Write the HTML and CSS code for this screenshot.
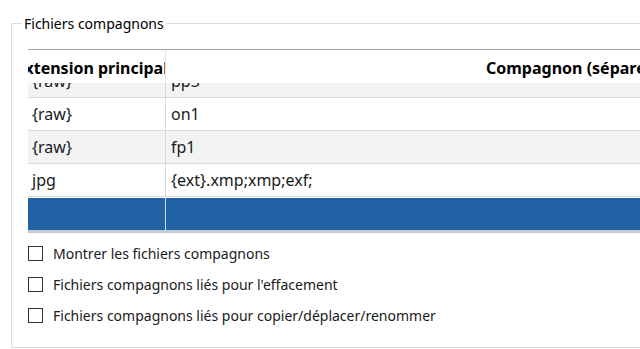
FILE: index.html
```html
<!DOCTYPE html>
<html lang="fr">
<head>
<meta charset="utf-8">
<link rel="stylesheet" href="styles.css">
</head>
<body>
<fieldset class="group">
  <legend class="group-title">Fichiers compagnons</legend>
  <div class="table">
    <div class="thead">
      <div class="th th-ext"><span>Extension principale</span></div>
      <div class="th th-comp"><span>Compagnon (séparés par ;)</span></div>
    </div>
    <div class="tbody">
      <div class="row alt partial"><div class="cell c1">{raw}</div><div class="cell c2">pp3</div></div>
      <div class="row"><div class="cell c1">{raw}</div><div class="cell c2">on1</div></div>
      <div class="row alt"><div class="cell c1">{raw}</div><div class="cell c2">fp1</div></div>
      <div class="row"><div class="cell c1">jpg</div><div class="cell c2">{ext}.xmp;xmp;exf;</div></div>
      <div class="row selected"><div class="cell c1"></div><div class="cell c2"></div></div>
    </div>
  </div>
  <div class="options">
    <label class="check"><span class="box"></span><span>Montrer les fichiers compagnons</span></label>
    <label class="check"><span class="box"></span><span>Fichiers compagnons liés pour l'effacement</span></label>
    <label class="check"><span class="box"></span><span>Fichiers compagnons liés pour copier/déplacer/renommer</span></label>
  </div>
</fieldset>
</body>
</html>
```
FILE: styles.css
```css
html, body {
  margin: 0;
  padding: 0;
  background: #ffffff;
  overflow: hidden;
  width: 640px;
  height: 349px;
}
body {
  font-family: "Noto Sans", "Open Sans", sans-serif;
  font-size: 14px;
  color: #000;
}
.group {
  margin: 14px 0 0 11px;
  padding: 16px 0 0 16px;
  width: 700px;
  height: 334px;
  border: 1px solid #dcdcdc;
  box-sizing: border-box;
  min-inline-size: 0;
}
.group-title {
  padding: 0 2px;
  margin-left: -6px;
  line-height: 19px;
  font-size: 14px;
}
.table {
  width: 900px;
  border-top: 1px solid #a3a3a3;
}
.thead {
  display: grid;
  grid-template-columns: 138px 1fr;
  height: 33px;
  background: #fff;
  position: relative;
  z-index: 1;
}
.th {
  display: flex;
  align-items: center;
  overflow: hidden;
  font-weight: bold;
  font-size: 16px;
  white-space: nowrap;
  padding-top: 3px;
  box-sizing: border-box;
}
.th-ext {
  justify-content: center;
  border-right: 1px solid #e4e4e4;
}
.th-comp {
  padding-left: 320px;
}
.tbody {
  border-bottom: 2px solid #c8c8c8;
}
.row {
  display: grid;
  grid-template-columns: 138px 1fr;
  height: 33px;
  box-sizing: border-box;
  border-bottom: 1px solid #dadada;
  background: #fff;
}
.row.alt { background: #f3f3f3; }
.row.partial { margin-top: -18px; }
.row.selected {
  background: #2162a5;
  border-bottom: 1px solid #b9cde2;
  margin-top: 1px;
}
.cell {
  display: flex;
  align-items: center;
  white-space: nowrap;
  font-size: 16px;
  color: #1a1a1a;
}
.c1 {
  padding-left: 4px;
  border-right: 1px solid #dadada;
}
.c2 { padding-left: 5px; }
.row.selected .c1 { border-right-color: #d0dcea; }
.options {
  display: flex;
  flex-direction: column;
  gap: 12px;
  margin-top: 11px;
}
.check {
  display: flex;
  align-items: center;
  gap: 10px;
  height: 19px;
  line-height: 19px;
  font-size: 14px;
  color: #1a1a1a;
}
.box {
  width: 13px;
  height: 13px;
  border: 1px solid #333;
  background: #fff;
  flex: none;
}
```
